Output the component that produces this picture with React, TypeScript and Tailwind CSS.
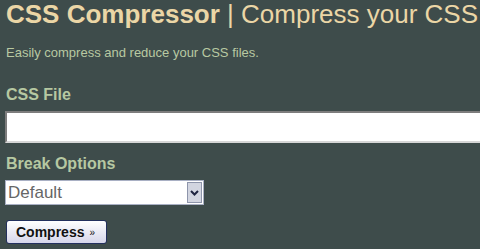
import React from "react";

export default function App() {
  return (
    <div className="w-[480px] h-[249px] overflow-hidden bg-[#3e4c4b] pl-[6px] font-['Liberation_Sans',Arial,sans-serif]">
      <h1 className="text-[26px] leading-[28px] whitespace-nowrap text-[#ebd6a6]">
        <span className="font-bold">CSS Compressor</span>
        <span className="font-normal"> | Compress your CSS</span>
      </h1>
      <p className="mt-[17px] text-[13px] leading-[16px] text-[#b8c9a2] whitespace-nowrap">
        Easily compress and reduce your CSS files.
      </p>
      <label className="block mt-[24px] text-[16px] leading-[20px] font-bold text-[#b6c8a2]">
        CSS File
      </label>
      <div className="mt-[6px] ml-[-1px] w-[520px] h-[32px] bg-white border-2 border-t-[#7d7d7d] border-l-[#7d7d7d] border-b-[#d6d6d6] border-r-[#d6d6d6]" />
      <label className="block mt-[11px] text-[16px] leading-[20px] font-bold text-[#b6c8a2]">
        Break Options
      </label>
      <div className="mt-[6px] ml-[-1px] w-[199px] h-[25px] flex items-stretch bg-white border border-[#a9b0c4]">
        <span className="flex-1 pl-[2px] text-[17px] leading-[23px] text-[#666666]">Default</span>
        <span className="my-[1px] mr-[1px] w-[15px] flex items-center justify-center bg-[#d2d5e0] border border-[#8e95ab]">
          <svg width="9" height="6" viewBox="0 0 9 6">
            <path d="M1 1 L4.5 4.5 L8 1" stroke="#1e2440" strokeWidth="2" fill="none" />
          </svg>
        </span>
      </div>
      <button className="mt-[15px] w-[101px] h-[24px] flex items-center pl-[9px] rounded-[3px] border border-[#23305e] bg-gradient-to-b from-white to-[#d6d6ea] text-[14px] font-bold text-[#111111]">
        Compress<span className="ml-[5px] text-[10px] font-normal">»</span>
      </button>
    </div>
  );
}
